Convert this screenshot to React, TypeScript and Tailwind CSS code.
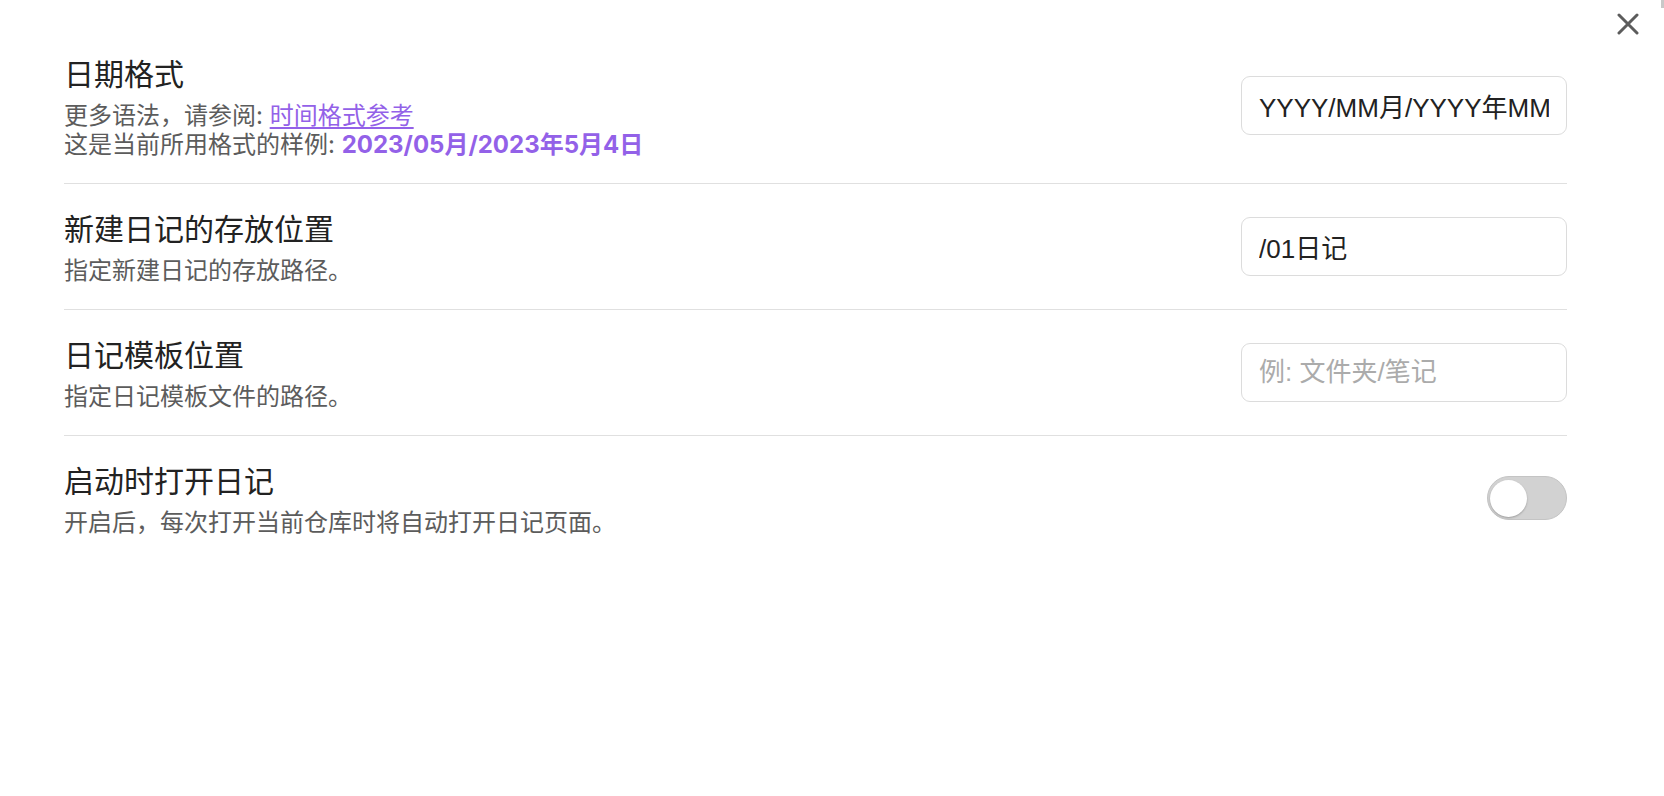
import { useState } from 'react';

const FONT = "font-['Inter','Noto_Sans_CJK_SC',sans-serif]";

function Row({
  title,
  children,
  control,
  last = false,
}: {
  title: string;
  children: React.ReactNode;
  control: React.ReactNode;
  last?: boolean;
}) {
  return (
    <div
      className={`flex items-center justify-between gap-8 pt-[27.5px] pb-[24.5px] ${last ? '' : 'border-b border-[#e0e0e0]'}`}
    >
      <div className="min-w-0">
        <div className="text-[30px] leading-[34px] text-[#222222]">{title}</div>
        <div className="mt-[10px] text-[24px] leading-[29px] text-[#5c5c5c]">{children}</div>
      </div>
      <div className="mb-[4px] shrink-0">{control}</div>
    </div>
  );
}

function TextField({ value, placeholder }: { value?: string; placeholder?: string }) {
  return (
    <input
      readOnly
      defaultValue={value}
      placeholder={placeholder}
      className="block h-[59px] w-[326px] rounded-[9px] border border-[#dcdcdc] bg-white px-[17px] font-['Liberation_Sans','Noto_Sans_CJK_SC',sans-serif] text-[26px] text-[#222222] outline-none placeholder:text-[#ababab]"
    />
  );
}

// Off-state switch; clicking flips it so the file stays a live component.
function Toggle() {
  const [on, setOn] = useState(false);
  return (
    <button
      type="button"
      onClick={() => setOn(!on)}
      className={`flex h-[44px] w-[80px] items-center rounded-full border border-[#c4c4c4] px-[2px] ${on ? 'justify-end bg-[#9361e8]' : 'justify-start bg-[#d2d2d2]'}`}
    >
      <span className="block h-[37px] w-[37px] rounded-full bg-white shadow-[0_1px_2px_rgba(0,0,0,0.25)]" />
    </button>
  );
}

export default function App() {
  return (
    <div className={`relative h-[796px] w-full overflow-hidden bg-white ${FONT}`}>
      <button type="button" className="absolute right-[25px] top-[13px] text-[#5c5c5c]" aria-label="关闭">
        <svg width="22" height="22" viewBox="0 0 22 22" fill="none" stroke="currentColor" strokeWidth="3" strokeLinecap="round">
          <path d="M2 2L20 20M20 2L2 20" />
        </svg>
      </button>
      <div className="absolute right-0 top-0 h-[8px] w-[3px] bg-[#c8c8c8]" />

      <div className="pl-[64px] pr-[97px] pt-[29px]">
        <Row title="日期格式" control={<TextField value="YYYY/MM月/YYYY年MM" />}>
          <div>
            更多语法，请参阅:{' '}
            <a className="text-[#9361e8] underline underline-offset-[3px]">时间格式参考</a>
          </div>
          <div>
            这是当前所用格式的样例: <span className="font-bold text-[#9361e8]">2023/05月/2023年5月4日</span>
          </div>
        </Row>
        <Row title="新建日记的存放位置" control={<TextField value="/01日记" />}>
          指定新建日记的存放路径。
        </Row>
        <Row title="日记模板位置" control={<TextField placeholder="例: 文件夹/笔记" />}>
          指定日记模板文件的路径。
        </Row>
        <Row title="启动时打开日记" control={<Toggle />} last>
          开启后，每次打开当前仓库时将自动打开日记页面。
        </Row>
      </div>
    </div>
  );
}
